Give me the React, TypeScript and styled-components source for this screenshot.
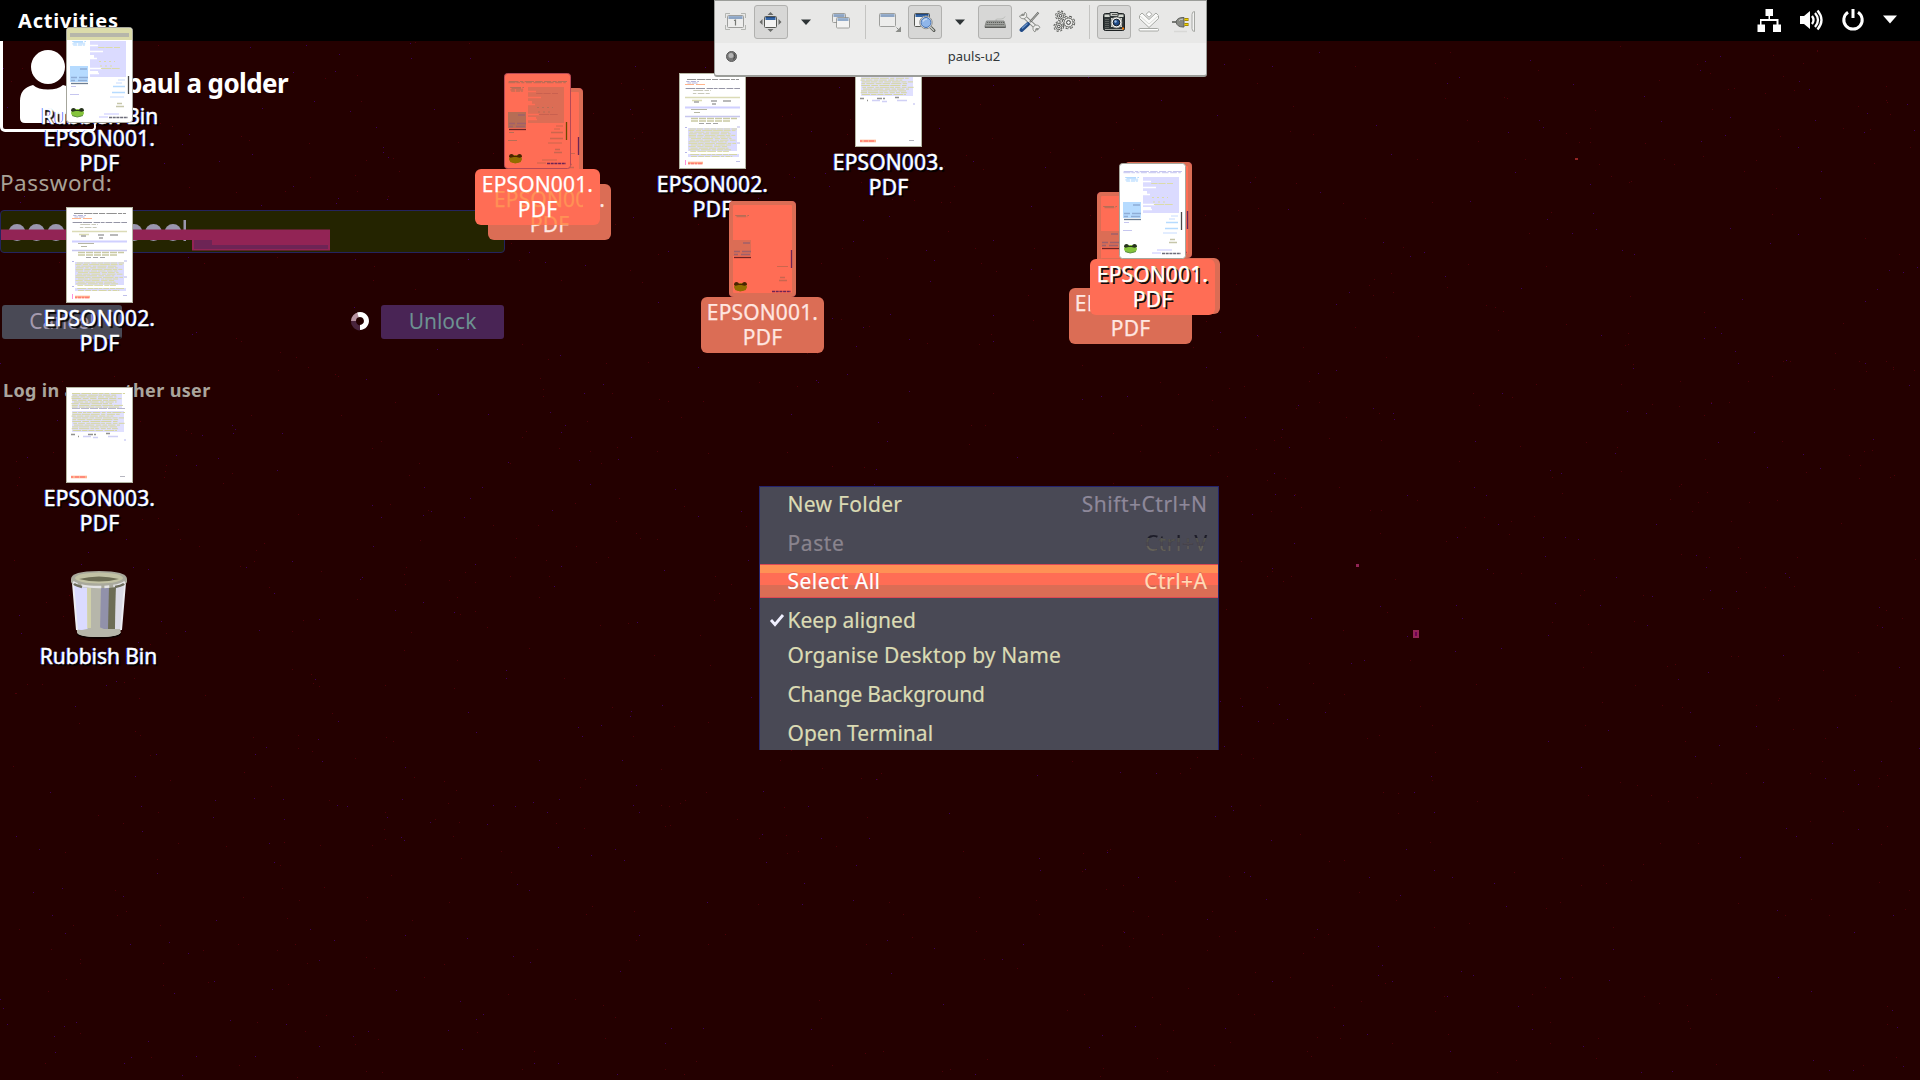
import React from 'react';
import styled, { createGlobalStyle, css } from 'styled-components';

const GlobalStyle = createGlobalStyle`
  * { box-sizing: border-box; }
  html, body { margin: 0; padding: 0; background: #240000; overflow: hidden; }
  body { font-family: "Noto Sans", "Open Sans", sans-serif; }
  svg { display: block; flex: none; }
`;

const Screen = styled.div`
  position: relative;
  width: 1920px;
  height: 1080px;
  overflow: hidden;
  background: #240000;
`;

const Speckles = styled.svg`
  position: absolute;
  inset: 0;
`;

const TopBar = styled.header`
  display: flex;
  align-items: center;
  justify-content: space-between;
  height: 41px;
  padding: 0 22px 0 18px;
  background: #000;
  position: relative;
`;

const Activities = styled.div`
  color: #fff;
  font-size: 20px;
  font-weight: 700;
  line-height: 41px;
  letter-spacing: 0.8px;
`;

/* Login panel */
const Login = styled.section`
  position: relative;
  width: 506px;
  display: flex;
  flex-direction: column;
`;

const UserRow = styled.div`
  display: flex;
  height: 91px;
`;

const Avatar = styled.div`
  width: 96px;
  height: 91px;
  border: 3px solid #fff;
  border-top: 0;
  border-right-width: 2px;
  border-radius: 0 0 5px 5px;
  overflow: hidden;
`;

const UserName = styled.div`
  margin: 22px 0 0 30px;
  color: #fff;
  font-size: 26px;
  line-height: 40px;
  font-weight: 700;
  white-space: nowrap;
  letter-spacing: -0.6px;
`;

const PasswordLabel = styled.div`
  margin-top: 36px;
  height: 42px;
  color: #a8a296;
  font-size: 22.5px;
  line-height: 30px;
  letter-spacing: 0.5px;
`;

const Field = styled.div`
  width: 505px;
  height: 43px;
  background: #242400;
  border: 1px solid #24245e;
  border-radius: 4px;
`;

const Actions = styled.div`
  margin-top: 52px;
  display: flex;
  align-items: center;
  height: 34px;
  padding-left: 2px;
`;

const Button = styled.div<{ $primary?: boolean }>`
  width: ${p => (p.$primary ? 123 : 120)}px;
  height: 34px;
  border-radius: 3px;
  text-align: center;
  line-height: 33px;
  font-size: 21px;
  background: ${p => (p.$primary ? '#492455' : '#494955')};
  color: ${p => (p.$primary ? '#6d9191' : '#a49aae')};
`;

const SpinnerSlot = styled.div`
  width: 39px;
  margin-left: 220px;
  display: flex;
  justify-content: flex-start;
  padding-left: 8px;
  padding-bottom: 2px;
`;

const OtherUser = styled.div`
  margin: 38px 0 0 3px;
  color: #aaa59d;
  font-size: 18px;
  font-weight: 700;
  line-height: 26px;
  white-space: nowrap;
  letter-spacing: 0.35px;
`;

/* Desktop icons, freely placed on the canvas */
type Tone = 'plain' | 'bright' | 'dim' | 'raised';

const Item = styled.div<{ $x: number; $y: number }>`
  position: absolute;
  left: ${p => p.$x}px;
  top: ${p => p.$y}px;
  width: 125px;
  display: flex;
  flex-direction: column;
  align-items: center;
`;

const glow = css`
  -webkit-text-stroke: 0.4px #fff;
  text-shadow: 2px 2px 1px #000, -1px 0 0 rgba(30, 50, 255, .85), 1px 0 0 rgba(90, 220, 255, .3);
`;

const Label = styled.div<{ $tone: Tone }>`
  position: relative;
  overflow: hidden;
  width: ${p => (p.$tone === 'dim' ? 123 : 125)}px;
  height: 56px;
  padding-top: 3px;
  border-radius: 6px;
  text-align: center;
  font-size: 21px;
  line-height: 25px;
  letter-spacing: 0.15px;
  white-space: pre;
  color: ${p => (p.$tone === 'dim' ? '#ffe6e0' : '#fff')};
  background: ${p => ({ plain: 'transparent', bright: '#ff6d55', dim: '#db6d55', raised: '#ff6d55' }[p.$tone])};
  -webkit-text-stroke: 0.25px currentColor;
  ${p => p.$tone === 'plain' && glow}
  ${p => p.$tone === 'raised' && css`text-shadow: 2px 2px 0 #140c0c, 1px 0 0 #dbdb91;`}
`;

const LabelText = styled.div`
  position: relative;
`;

/* Residue of the label lying behind the dragged one */
const LabelGhost = styled.div`
  position: absolute;
  left: 13px;
  top: 18px;
  width: 95px;
  padding-left: 6px;
  overflow: hidden;
  color: #ff9155;
  text-align: left;
`;

const GhostSecond = styled.div`
  padding-left: 36px;
`;

function Lines({ seed, x, y, w, n, step, color, jitter = 0.25 }: { seed: number; x: number; y: number; w: number; n: number; step: number; color: string; jitter?: number }) {
  let s = seed;
  const rnd = () => (s = (s * 16807) % 2147483647) / 2147483647;
  let d = '';
  for (let i = 0; i < n; i++) {
    const end = x + w * (1 - rnd() * jitter);
    let cx = x + rnd() * 3;
    while (cx < end) {
      const len = 3 + rnd() * 8;
      d += `M${cx.toFixed(1)} ${(y + i * step).toFixed(1)}H${Math.min(end, cx + len).toFixed(1)}`;
      cx += len + 0.6 + rnd();
    }
  }
  return <path d={d} stroke={color} strokeWidth="1" fill="none" />;
}

function Frog({ hot }: { hot: boolean }) {
  return (
    <g>
      <ellipse cx="11.5" cy="86" rx="6.5" ry="4" fill={hot ? '#916d00' : '#85c43c'} />
      <path d="M5 84q0-3 2.500-3q2 0 2.500 2h3q.5-2 2.500-2q2.500 0 2.500 3l-2.500.8-3-.8h-3l-3 .8z" fill={hot ? '#492400' : '#26331c'} />
      <path d="M6 88.500q5 3 11 0" stroke={hot ? '#916d00' : '#619146'} fill="none" />
    </g>
  );
}

function LetterThumb({ tone, barred }: { tone: Tone; barred?: boolean }) {
  const hot = tone === 'bright' || tone === 'dim';
  const dim = tone === 'dim';
  const paper = hot ? '#ff6d55' : '#fff';
  const soft = hot ? '#db6d55' : '#dbdbff';
  const ink = hot ? '#b66d55' : '#c6c6ef';
  return (
    <svg width="67" height="96" viewBox="0 0 67 96">
      <rect x=".5" y=".5" width="66" height="95" rx="3" fill={paper} stroke={hot ? '#b64955' : '#a6a69c'} />
      {dim && <rect x="2" y="2" width="63" height="92" rx="3" fill="none" stroke="#db6d55" strokeWidth="4" />}
      {barred && <path d="M1 13V4q0-3 3-3h59q3 0 3 3v9z" fill="#dbdbaa" />}
      {barred && <path d="M4 8h59" stroke="#b6b6aa" strokeWidth="4" />}
      {!barred && !dim && <Lines seed={17} x={4} y={8.5} w={59} n={2} step={1.2} color={ink} jitter={0.05} />}
      <Lines seed={41} x={5} y={14.5} w={15} n={dim ? 2 : 4} step={1.2} color={hot ? '#b66d55' : '#b6dbff'} jitter={0.1} />
      {!dim && <path d="M24 14H60V50H24V47H32V44H24V32H28V28H24z" fill={soft} />}
      {!dim && <path d="M24 18.5h8M24 24.5h13M24 31.5h7M24 41.5h12M24 46.5h9" stroke={paper} strokeWidth="1.6" />}
      {!dim && <Lines seed={31} x={32} y={20.5} w={22} n={2} step={21} color={hot ? '#c9604f' : '#dbdbaa'} />}
      {!dim && <path d="M33 34.5h16M34 39h15" stroke={hot ? '#b66d55' : '#dbdbaa'} strokeWidth="1" strokeDasharray="2 3" />}
      <rect x="4" y="39" width="18" height="16" fill={hot ? (dim ? '#db6d55' : '#b66d55') : '#b6dbff'} />
      <path d="M14 42h7M5 50.5h6m2 0h9M5 53.5h4m3 0h9" stroke={hot ? '#a0606a' : '#8fadd6'} strokeWidth="1.4" />
      <path d="M5 56.5h17" stroke={hot ? '#6d2424' : '#6d7d91'} strokeWidth="1.3" />
      {!dim && <path d="M5 59.5h5M4 67.5h9" stroke={ink} />}
      <path d="M62.5 49V67" stroke={dim ? '#6d2455' : hot ? '#6d4900' : '#494949'} strokeWidth="1.3" />
      {!dim && <path d="M47 59.5h12M46 65.5h13" stroke={hot ? '#cc664d' : '#b6dbff'} strokeWidth="1.3" />}
      {!dim && <path d="M52 53h7M50 56h6M44 70h14" stroke={hot ? '#cc664d' : '#c6dbff'} />}
      {dim && <path d="M48 65.5h11" stroke="#cc664d" />}
      <path d="M51 76.5h5M50 79.5h8" stroke={hot ? '#c9664f' : '#c6c6aa'} strokeWidth="1.4" />
      {!dim && <path d="M38 87h15M33 90h9" stroke={hot ? '#cc664d' : '#c6c6ff'} strokeWidth="1.2" />}
      <path d="M43 90.5H62" stroke={hot ? '#6d2455' : '#6d6d7a'} strokeWidth="1.5" strokeDasharray="3 .7" />
      <Frog hot={hot} />
    </svg>
  );
}

function PageThumb({ kind }: { kind: 2 | 3 }) {
  return (
    <svg width="67" height="96" viewBox="0 0 67 96">
      <rect x=".5" y=".5" width="66" height="95" fill="#fff" stroke="#b4b6a4" />
      {kind === 2 ? (
        <g>
          <Lines seed={5} x={6} y={6.5} w={54} n={1} step={1} color="#919191" jitter={0.02} />
          <Lines seed={8} x={7} y={8.5} w={13} n={2} step={1.5} color="#b6b6db" />
          <path d="M6 11.5h9m2 0h9" stroke="#ffb48c" strokeWidth="1.1" />
          <Lines seed={9} x={6} y={15.5} w={55} n={1} step={1} color="#9595a5" jitter={0.02} />
          <Lines seed={21} x={12} y={17.5} w={20} n={2} step={3} color="#c9c9ba" />
          <path d="M6 24.5h55M13 27.5h10" stroke="#dbdbb6" strokeWidth="1.4" />
          <path d="M15 29h5m12-1h6m6 0h8M33 31h4" stroke="#a2a2a2" strokeWidth="1.3" />
          <path d="M6 34.5h55" stroke="#d0d0ff" strokeWidth="2" />
          <path d="M12 36.5h16M15 39.5h6" stroke="#b6b6a4" strokeWidth="1.2" />
          <path d="M6 43.5h55" stroke="#c7c7ed" strokeWidth="1.5" />
          <path d="M12 45.5h46M12 48h40" stroke="#c9c9a2" strokeWidth="1.6" strokeDasharray="7 1" />
          <path d="M20 50.5h20" stroke="#a4a4a4" strokeDasharray="5 2" />
          <path d="M9 55H58V78H9zM9 81H60V84H9z" fill="#dbdbff" />
          <Lines seed={27} x={9} y={56} w={49} n={15} step={1.6} color="#dbdba5" />
          <Lines seed={87} x={10} y={81.5} w={48} n={2} step={2} color="#d6d6a6" />
          <path d="M6 54.5h2M6 79.5h2M58 54h3M58 70h3" stroke="#b6b6e8" />
          <path d="M6.500 87v5" stroke="#ff91db" />
          <path d="M9 90h15" stroke="#ffb491" strokeWidth="2.600" />
          <path d="M9 90.500h2m1 0h3m1 0h2m1 0h4" stroke="#ff7d73" strokeWidth="1.500" />
          <path d="M57 88.5h4" stroke="#c0c0ea" />
        </g>
      ) : (
        <g>
          <path d="M6 6H56V21H6zM6 24H58V45H6z" fill="#e0e0ff" />
          <Lines seed={71} x={5} y={6.5} w={54} n={9} step={1.7} color="#d6d69f" />
          <path d="M6 21.5h54" stroke="#b5b5cc" strokeDasharray="8 1" />
          <Lines seed={171} x={5} y={25.5} w={54} n={11} step={1.8} color="#d6d69f" />
          <path d="M5 47.500h4m3 2h1m9-2h5m1 0h2m10-1h4" stroke="#91918f" strokeWidth="1.3" />
          <path d="M17 49.500h8m2 1h5m10-1h10M58 53h2" stroke="#d0d0f5" strokeWidth="1.500" />
          <path d="M5 90h16" stroke="#ffb491" strokeWidth="2.600" />
          <path d="M5 90h2m2 0h4m1 0h5" stroke="#ff7d73" strokeWidth="1.600" />
          <path d="M54 89.5h5" stroke="#b6b6c0" />
        </g>
      )}
    </svg>
  );
}

function PdfItem({ x, y, n, tone = 'plain', barred, ghost }: { x: number; y: number; n: 1 | 2 | 3; tone?: Tone; barred?: boolean; ghost?: boolean }) {
  return (
    <Item $x={x} $y={y}>
      {n === 1 ? <LetterThumb tone={tone} barred={barred} /> : <PageThumb kind={n} />}
      <Label $tone={tone}>
        {ghost && <LabelGhost>EPSON001.<GhostSecond>PDF</GhostSecond></LabelGhost>}
        <LabelText>{`EPSON00${n}.\nPDF`}</LabelText>
      </Label>
    </Item>
  );
}

const BinLabel = styled.div`
  color: #fff;
  font-size: 21px;
  line-height: 26px;
  letter-spacing: -0.05px;
  white-space: nowrap;
  ${glow}
`;

const BinItem = styled(Item)`
  gap: 3px;
`;

const BinIcon = () => (
  <svg width="58" height="70" viewBox="0 0 58 70">
    <ellipse cx="29" cy="64" rx="22" ry="5" fill="#0d0000" />
    <path d="M3 13L7 62q0 5 21.500 5t22-5L55 13z" fill="#b6b6aa" />
    <path d="M3 13l3.500 46q4 2 11 0L17 15z" fill="#dbdbff" />
    <path d="M17 15h4v43h-4z" fill="#dbdbaa" opacity=".7" />
    <path d="M31 17h8v42h-7l-2 2z" fill="#9191aa" />
    <path d="M39 16h7l-1 43h-7z" fill="#6d6d55" />
    <path d="M46 15h8l-3 44h-6z" fill="#dbdbe6" />
    <path d="M3 13l4 47M55 13l-4 47" stroke="#eeeef4" strokeWidth="2" fill="none" />
    <path d="M7 62q9-4 16-2l6-3 5 2q10 0 17 3q-2 5-22 5T7 62z" fill="#b6b6aa" />
    <path d="M1 9q0-8 28-8t28 8v3q-2 6-28 6T1 12z" fill="#a9a99c" />
    <ellipse cx="29" cy="8" rx="24" ry="5.500" fill="#c2c2a5" />
    <path d="M9 9q20-5 40 0q-20 5-40 0" fill="#6d6d55" />
    <path d="M3 12q7 5 26 5t26-5" stroke="#e4e4e6" strokeWidth="2.500" fill="none" strokeDasharray="5 4 20 3" />
    <path d="M4 14q3 2 8 3M45 17q6-1 9-3" stroke="#6d6d5c" strokeWidth="2.500" fill="none" />
  </svg>
);

/* Context menu */
const Menu = styled.nav`
  position: absolute;
  left: 759px;
  top: 486px;
  width: 460px;
  height: 264px;
  display: flex;
  flex-direction: column;
  background: #494955;
  border: solid #24246d;
  border-width: 1px 1px 0;
`;

const MenuRow = styled.div<{ $h: number; $mt?: number; $color: string; $active?: boolean }>`
  display: flex;
  align-items: center;
  height: ${p => p.$h}px;
  margin-top: ${p => p.$mt ?? 0}px;
  padding-right: 11px;
  font-size: 21px;
  line-height: 28px;
  -webkit-text-stroke: 0.2px;
  color: ${p => p.$color};
  ${p => p.$active && css`
    background: linear-gradient(#ff9155 0 8px, #ff6d55 8px 20px, #db6d55 20px);
    border: solid #db4955;
    border-width: 1px 0;
    text-shadow: 0 -1px 0 rgba(182, 73, 85, .45);
  `}
`;

const CheckSlot = styled.span`
  width: 27.5px;
  padding-left: 9px;
`;

const Name = styled.span<{ $ls: number }>`
  flex: 1;
  letter-spacing: ${p => p.$ls}px;
`;

const Shortcut = styled.span<{ $color: string; $broken?: boolean }>`
  color: ${p => p.$color};
  letter-spacing: 0.5px;
  margin-right: -0.5px;
  ${p => p.$broken && css`
    background: repeating-linear-gradient(#1c1c28 0 9px, #55554f 9px 13px, #4d4950 13px 17px, #66635a 17px 28px);
    background-clip: text;
    -webkit-text-fill-color: transparent;
  `}
`;

const menuRows = [
  { name: 'New Folder', keys: 'Shift+Ctrl+N', h: 34, mt: 0, color: '#dbdbb4', keyColor: '#8e889a', ls: 0.3 },
  { name: 'Paste', keys: 'Ctrl+V', h: 34, mt: 5, color: '#8a848e', keyColor: '#33303a', ls: 0.6, broken: true },
  { name: 'Select All', keys: 'Ctrl+A', h: 34, mt: 4, color: '#fff', keyColor: '#ffdbb6', ls: 0.5, active: true },
  { name: 'Keep aligned', h: 34, mt: 5, color: '#dbdbb4', ls: 0, checked: true },
  { name: 'Organise Desktop by Name', h: 34, mt: 1, color: '#dbdbb4', ls: 0.13 },
  { name: 'Change Background', h: 34, mt: 5, color: '#dbdbb4', ls: -0.2 },
  { name: 'Open Terminal', h: 34, mt: 5, color: '#dbdbb4', ls: 0 },
];

/* Remote viewer toolbar */
const Viewer = styled.aside`
  position: absolute;
  left: 714px;
  top: 0;
  width: 493px;
  height: 77px;
  display: flex;
  flex-direction: column;
  background: #f0f0f0;
  border: 1px solid #9b9d99;
  border-bottom-width: 2px;
  border-radius: 0 0 3px 3px;
`;

const Tools = styled.div`
  display: flex;
  gap: 1px;
  height: 42px;
  padding: 4px 0 0 4px;
  background: #e8e8e7;
`;

const Tool = styled.div<{ $on?: boolean }>`
  width: 34px;
  height: 34px;
  display: flex;
  align-items: center;
  justify-content: center;
  border: 1px solid ${p => (p.$on ? '#b1b1af' : 'transparent')};
  background: ${p => (p.$on ? '#d7d7d6' : 'transparent')};
  border-radius: 3px;
`;

const Divider = styled.div`
  width: 13px;
  height: 34px;
  display: flex;
  justify-content: center;
  &::before { content: ''; width: 1px; background: #c4c4c2; }
`;

const TitleRow = styled.div`
  position: relative;
  display: flex;
  align-items: center;
  height: 27px;
  padding-left: 11px;
`;

const Title = styled.div`
  width: 72px;
  margin-left: 201px;
  text-align: center;
  color: #32373a;
  font-size: 13px;
  line-height: 18px;
  padding-bottom: 1px;
  white-space: nowrap;
`;

const I = ({ children }: { children: React.ReactNode }) => (
  <svg width="24" height="24" viewBox="0 0 24 24" fill="none">{children}</svg>
);

const Win = ({ x, y, w, h, faded }: { x: number; y: number; w: number; h: number; faded?: boolean }) => (
  <g opacity={faded ? 0.5 : 1}>
    <rect x={x} y={y} width={w} height={h} rx="1" fill="#f3f3f2" stroke="#555753" />
    <rect x={x + 1} y={y + 1} width={w - 2} height="2.500" fill="#3465a4" />
    <path d={`M${x + 1} ${y + 1}h${w - 2}`} stroke={faded ? '#4a78b4' : '#204a87'} />
  </g>
);

const Caret = () => (
  <svg width="10" height="6" viewBox="0 0 10 6"><path d="M0 .5h10L5 6z" fill="#2e3436" /></svg>
);

const Gear = ({ x, y, r }: { x: number; y: number; r: number }) => (
  <g>
    <circle cx={x} cy={y} r={r + 0.8} stroke="#4f514e" strokeWidth="2.600" strokeDasharray={`${(r + 0.8) * 0.45} ${(r + 0.8) * 0.335}`} />
    <circle cx={x} cy={y} r={r} fill="#e6e6e4" stroke="#555753" strokeWidth="1" />
    <circle cx={x} cy={y} r={r + 0.7} stroke="#e6e6e4" strokeWidth="1.200" strokeDasharray={`${(r + 0.7) * 0.3} ${(r + 0.7) * 0.485}`} strokeDashoffset="-.3" />
    <circle cx={x} cy={y} r={r * 0.42} fill="#f3f3f3" stroke="#3c3e3c" strokeWidth="1" />
  </g>
);

function ViewerTools() {
  return (
    <Tools>
      <Tool><I>
        <g stroke="#b3b5b1"><path d="M1.500 8V3.500H6M17 3.500h4.500V8M21.500 15v4.500H17M6 19.500H1.500V15" /></g>
        <Win x={3.500} y={5.500} w={16} h={12} faded />
        <path d="M10 10.500l1.500-.5v5.500" stroke="#777975" strokeWidth="1.200" />
      </I></Tool>
      <Tool $on><I>
        <path d="M11.500 2l3 3h-6zM11.500 22l3-3h-6zM.5 12l3-3v6zM22.500 12l-3-3v6z" fill="#6a6c69" />
        <Win x={5.500} y={6.500} w={12} h={11} />
      </I></Tool>
      <Tool><Caret /></Tool>
      <Tool><I><Win x={3.500} y={3.500} w={13} h={9} faded /><rect x="7.500" y="7.500" width="13" height="10.500" fill="#f3f3f2" /><Win x={7.500} y={7.500} w={13} h={10.500} faded /></I></Tool>
      <Divider />
      <Tool><I>
        <Win x={1.500} y={3.500} w={16} h={13} faded />
        <path d="M23 16.500v5.500h-5.500z" fill="#8b8d89" /><path d="M18.500 17.500l3 3" stroke="#8b8d89" />
      </I></Tool>
      <Tool $on><I>
        <Win x={1.500} y={3.500} w={15} h={13} />
        <path d="M17 16.500l4 4" stroke="#555753" strokeWidth="3" strokeLinecap="round" />
        <path d="M17.300 17l3.700 3.600" stroke="#d3d7cf" strokeWidth="1.200" />
        <circle cx="13" cy="12.500" r="5.600" fill="#a3c3ec" stroke="#f0f0f0" strokeWidth="2.400" />
        <circle cx="13" cy="12.500" r="5" fill="#8fb6ea" stroke="#3e6cae" strokeWidth="1" />
        <circle cx="13" cy="12.500" r="6.300" stroke="#777975" strokeWidth=".8" />
        <path d="M10 11.500q1-2.500 4-2.500" stroke="#c4d8f0" strokeWidth="1.300" />
      </I></Tool>
      <Tool><Caret /></Tool>
      <Tool $on><I>
        <path d="M14 11q-3-1 0-2h4q3 0 4-2.500" stroke="#bcbebb" />
        <path d="M3.500 11h17.500l1.500 5v1.500H2V16z" fill="#a0a29e" stroke="#7a7c79" strokeWidth=".8" />
        <path d="M4 12.500h17M3.500 14.500h18" stroke="#5c5e5b" strokeDasharray="1.200 .8" />
        <path d="M2 17.200h20.500" stroke="#4a4c49" />
      </I></Tool>
      <Tool><I>
        <path d="M5 5.500l14 13" stroke="#8a8c88" strokeWidth="4" strokeLinecap="round" />
        <path d="M5 5.500l14 13" stroke="#eeeeec" strokeWidth="2.200" />
        <path d="M1.500 6a3.800 3.800 0 0 0 6 2 3.800 3.800 0 0 0-.5-6L6 5.500H4z" fill="#eeeeec" stroke="#8a8c88" strokeWidth=".9" />
        <path d="M22 17.500a3.800 3.800 0 0 0-6-1.500 3.800 3.800 0 0 0 1 6l1-3.500h2.500z" fill="#eeeeec" stroke="#8a8c88" strokeWidth=".9" />
        <path d="M20.500 2.500l-8.500 9.500" stroke="#666865" strokeWidth="2" /><path d="M20.500 2.500l-8 9" stroke="#d6d6d4" strokeWidth=".7" />
        <path d="M10 14l-6.500 6" stroke="#204a87" strokeWidth="4" strokeLinecap="round" />
        <path d="M9.500 13.500l-5.500 5" stroke="#6a95cc" strokeWidth="1.200" />
      </I></Tool>
      <Tool><I><Gear x={7.500} y={5.800} r={3.200} /><Gear x={15.500} y={12.500} r={4.600} /><Gear x={5.800} y={16.500} r={3.200} /></I></Tool>
      <Divider />
      <Tool $on><I>
        <rect x="1.500" y="3.500" width="21" height="17" rx="2" fill="#2e3436" stroke="#1c2022" />
        <path d="M2.500 7v-2.500h19V7z" fill="#d3d7cf" /><path d="M8 2.500h8v4H8z" fill="#c4c6c2" stroke="#2e3436" />
        <path d="M10 4.500h5" stroke="#555753" />
        <path d="M4 9v9M6 9v9" stroke="#888a85" strokeDasharray="1 1" />
        <path d="M3 19.500h18" stroke="#a5a7a3" />
        <path d="M9 8h11v9H9z" fill="#d3d7cf" />
        <circle cx="14.500" cy="12.500" r="5.500" fill="#eeeeec" stroke="#777975" strokeWidth=".8" />
        <circle cx="14.500" cy="12.500" r="3.300" fill="#204a87" stroke="#141c26" />
        <circle cx="13.500" cy="11.500" r="1.200" fill="#9dbfe8" /><path d="M20 17.500h2v2h-2z" fill="#f57900" />
      </I></Tool>
      <Tool><I>
        <path d="M2.500 5.500L5 3l7 6.500L19 3l2.500 2.500V8.500L12 17.500 2.500 8.500z" fill="#fafaf9" stroke="#a5a7a3" />
        <path d="M2.500 5.500L12 14l9.500-8.500" stroke="#cfd0cd" strokeWidth=".8" />
        <path d="M12 1.500l3 2.800-3 3-3-3z" fill="#fff" stroke="#a5a7a3" strokeLinejoin="round" />
        <rect x="2" y="18.500" width="19.500" height="2.500" rx="1" fill="#fff" stroke="#a5a7a3" />
      </I></Tool>
      <Tool><I>
        <path d="M-1 12h7" stroke="#777975" strokeWidth="2" />
        <path d="M4 12q1-4.500 7-4.500h1v9.500h-1q-6 0-7-5z" fill="#888a85" stroke="#5f615e" />
        <path d="M7 10.500q1-1.300 4-1.300" stroke="#c6c8c4" />
        <path d="M12.500 9.500h4M12.500 14.500h4" stroke="#8f7000" strokeWidth="2.800" /><path d="M12.500 9.500h3.500M12.500 14.500h3.500" stroke="#edd400" strokeWidth="1.400" />
        <path d="M22.500 1.500q-2.500 0-2.500 3v14q0 3 2.500 3z" fill="#f3f3f2" stroke="#a5a7a3" />
        <path d="M2 21.500h13" stroke="#d8d8d6" strokeWidth="1.500" />
      </I></Tool>
    </Tools>
  );
}

const Tray = styled.div`
  display: flex;
  align-items: center;
  gap: 17px;
  padding-bottom: 2px;
`;

function buildSpeckles() {
  let s = 90210;
  const rnd = () => (s = (s * 16807) % 2147483647) / 2147483647;
  let red = '';
  let violet = '';
  for (let i = 0; i < 1500; i++) {
    const p = `M${Math.floor(rnd() * 1920)} ${42 + Math.floor(rnd() * 1036)}h1v1h-1z`;
    if (i % 5 < 3) red += p; else violet += p;
  }
  return { red, violet };
}
const speckles = buildSpeckles();

export default function App() {
  return (
    <>
      <GlobalStyle />
      <Screen>
        <Speckles width="1920" height="1080">
          <path d={speckles.red} fill="#4c0008" />
          <path d={speckles.violet} fill="#3c0060" />
          <rect x="1356" y="564" width="3" height="3" fill="#922455" />
          <rect x="1575" y="158" width="3" height="2" fill="#922424" />
          <rect x="1414" y="631" width="4" height="6" fill="#6d0055" stroke="#922455" strokeWidth="2" />
        </Speckles>

        <TopBar>
          <Activities>Activities</Activities>
          <Tray>
            <svg width="24" height="24" viewBox="0 0 24 24"><path d="M8.500 1h7.500v7h-3v3h8.500v5.500H24V24h-8v-7.500h3.500V13h-15v3.500H8V24H.5v-7.500H3V11h8.500V8h-3z" fill="#fff" /></svg>
            <svg width="26" height="24" viewBox="0 0 26 24"><path d="M2 8h4l6-5v18l-6-5H2z" fill="#fff" /><path d="M14 8q3 4 0 8M17 5q6 7 0 14M19.500 2.500q8 9.500 0 19" stroke="#fff" strokeWidth="2.300" fill="none" /></svg>
            <svg width="24" height="24" viewBox="0 0 24 24"><path d="M7 4.200a9.200 9.200 0 1 0 10 0M12 1v9" stroke="#fff" strokeWidth="3" fill="none" /></svg>
            <svg width="16" height="9" viewBox="0 0 16 9"><path d="M1 .5h14L8 8.500z" fill="#fff" /></svg>
          </Tray>
        </TopBar>

        <Login>
          <UserRow>
            <Avatar>
              <svg width="91" height="88" viewBox="3 41 91 88">
                <circle cx="48" cy="67" r="17" fill="#fff" />
                <path d="M20 118V101Q20 88 33 85Q38 89.500 48 89.500T63 85Q77 88 77 101V118q0 5-5 5H25q-5 0-5-5z" fill="#fff" />
              </svg>
            </Avatar>
            <UserName>paul a golder</UserName>
          </UserRow>
          <PasswordLabel>Password:</PasswordLabel>
          <Field>
            <svg width="330" height="41" viewBox="1 211 330 41">
              {Array.from({ length: 9 }, (_, i) => (
                <circle key={i} cx={17 + i * 19.5} cy="232.500" r="8.500" fill="#9a96ae" />
              ))}
              <rect x="183.500" y="220" width="2.500" height="21" fill="#9a96ae" />
              <path d="M0 229.500H330V250.500H192V240H0z" fill="#922455" />
              <path d="M194 240H212V245H328V249H194z" fill="#6d2455" />
            </svg>
          </Field>
          <Actions>
            <Button>Cancel</Button>
            <SpinnerSlot>
              <svg width="20" height="20" viewBox="0 0 20 20" fill="none" strokeWidth="5">
                <path d="M10 17a7 7 0 0 1-6.500-8" stroke="#49243c" />
                <path d="M3.500 10A6.500 6.500 0 0 1 9 3.600" stroke="#b6919f" />
                <path d="M8 3.800a6.500 6.500 0 1 1 2 12.700" stroke="#fff" />
              </svg>
            </SpinnerSlot>
            <Button $primary>Unlock</Button>
          </Actions>
          <OtherUser>Log in as another user</OtherUser>
        </Login>

        <Item $x={37} $y={103}><BinLabel>Rubbish Bin</BinLabel></Item>
        <PdfItem x={37} y={27} n={1} barred />
        <PdfItem x={37} y={207} n={2} />
        <PdfItem x={37} y={387} n={3} />
        <BinItem $x={36} $y={570}><BinIcon /><BinLabel>Rubbish Bin</BinLabel></BinItem>

        <PdfItem x={487} y={88} n={1} tone="dim" />
        <PdfItem x={475} y={73} n={1} tone="bright" ghost />
        <PdfItem x={650} y={73} n={2} />
        <PdfItem x={826} y={51} n={3} />
        <PdfItem x={700} y={201} n={1} tone="dim" />
        <PdfItem x={1068} y={192} n={1} tone="dim" />
        <PdfItem x={1096} y={162} n={1} tone="dim" />
        <PdfItem x={1090} y={163} n={1} tone="raised" />

        <Menu>
          {menuRows.map(r => (
            <MenuRow key={r.name} $h={r.h} $mt={r.mt} $color={r.color} $active={r.active}>
              <CheckSlot>
                {r.checked && (
                  <svg width="16" height="15" viewBox="0 0 16 15"><path d="M2 7l4 4.500L14 2" stroke="#f0f0ff" strokeWidth="2.800" fill="none" /></svg>
                )}
              </CheckSlot>
              <Name $ls={r.ls}>{r.name}</Name>
              {r.keys && <Shortcut $color={r.keyColor!} $broken={r.broken}>{r.keys}</Shortcut>}
            </MenuRow>
          ))}
        </Menu>

        <Viewer>
          <ViewerTools />
          <TitleRow>
            <svg width="11" height="11" viewBox="0 0 11 11"><circle cx="5.500" cy="5.500" r="5" fill="#777" stroke="#5a5a5a" /><circle cx="5" cy="4.500" r="2.500" fill="#b4b4b4" /><path d="M8 2.500q2 3-.5 6" stroke="#444" fill="none" /></svg>
            <Title>pauls-u2</Title>
          </TitleRow>
        </Viewer>
      </Screen>
    </>
  );
}
